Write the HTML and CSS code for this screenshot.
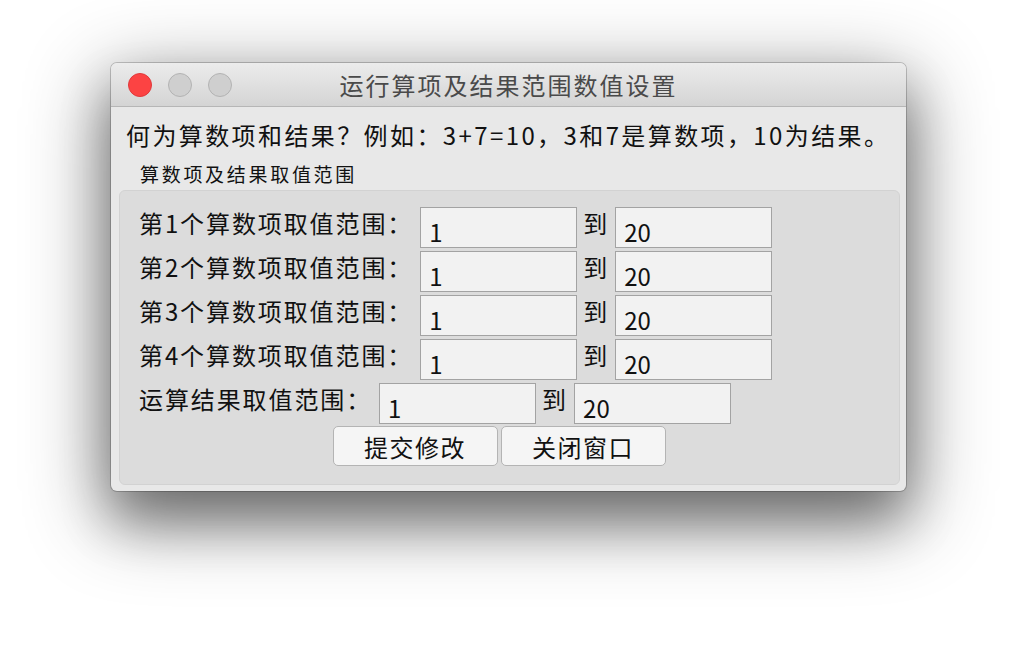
FILE: index.html
```html
<!DOCTYPE html>
<html lang="zh-CN">
<head>
    <meta charset="UTF-8">
    <meta name="viewport" content="width=device-width, initial-scale=1.0">
    <title>运行算项及结果范围数值设置</title>
    <link rel="stylesheet" href="styles.css">
</head>
<body>
    <div class="desktop">
        <div class="window">
            <div class="titlebar">
                <div class="lights">
                    <span class="light close"></span>
                    <span class="light"></span>
                    <span class="light"></span>
                </div>
                <div class="title">运行算项及结果范围数值设置</div>
            </div>
            <div class="content">
                <p class="intro">何为算数项和结果？例如：3+7=10，3和7是算数项，10为结果。</p>
                <div class="group-title">算数项及结果取值范围</div>
                <div class="panel">
                    <div class="row">
                        <label>第1个算数项取值范围：</label>
                        <input type="text" value="1">
                        <span class="to">到</span>
                        <input type="text" value="20">
                    </div>
                    <div class="row">
                        <label>第2个算数项取值范围：</label>
                        <input type="text" value="1">
                        <span class="to">到</span>
                        <input type="text" value="20">
                    </div>
                    <div class="row">
                        <label>第3个算数项取值范围：</label>
                        <input type="text" value="1">
                        <span class="to">到</span>
                        <input type="text" value="20">
                    </div>
                    <div class="row">
                        <label>第4个算数项取值范围：</label>
                        <input type="text" value="1">
                        <span class="to">到</span>
                        <input type="text" value="20">
                    </div>
                    <div class="row">
                        <label>运算结果取值范围：</label>
                        <input type="text" value="1">
                        <span class="to">到</span>
                        <input type="text" value="20">
                    </div>
                    <div class="buttons">
                        <button type="button">提交修改</button>
                        <button type="button">关闭窗口</button>
                    </div>
                </div>
            </div>
        </div>
    </div>
</body>
</html>
```

FILE: styles.css
```css
html, body {
    height: 100%;
}
body {
    margin: 0;
    background-color: #fff;
    font-family: "Noto Sans CJK SC", "Liberation Sans", sans-serif;
    color: #111;
}
.desktop {
    height: 652px;
    padding: 63px 0 0 111px;
    box-sizing: border-box;
    overflow: hidden;
}
.window {
    width: 795px;
    height: 428px;
    box-sizing: border-box;
    background-color: #e8e8e8;
    border-radius: 6px;
    box-shadow: 0 22px 80px 6px rgba(0, 0, 0, 0.45), 0 30px 50px rgba(0, 0, 0, 0.3), 0 0 0 1px rgba(0, 0, 0, 0.2);
    overflow: hidden;
}
.titlebar {
    height: 43px;
    display: grid;
    grid-template-columns: 1fr auto 1fr;
    align-items: center;
    background: linear-gradient(#ececec, #d4d4d4);
    border-bottom: 1px solid #b6b6b6;
}
.lights {
    display: flex;
    gap: 16px;
    padding-left: 17px;
}
.light {
    width: 22px;
    height: 22px;
    border-radius: 50%;
    background-color: #cfcfcf;
    border: 1px solid #b3b3b3;
}
.light.close {
    background-color: #fc4343;
    border-color: #e0393b;
}
.title {
    grid-column: 2;
    font-size: 24px;
    letter-spacing: 2px;
    color: #4a4a4a;
}
.content {
    padding: 0 6px 7px 8px;
}
.intro {
    margin: 0;
    padding: 13px 0 0 7px;
    font-size: 24px;
    line-height: 30px;
    letter-spacing: 2.4px;
}
.group-title {
    padding: 12px 0 0 21px;
    font-size: 19px;
    line-height: 24px;
    letter-spacing: 2.7px;
}
.panel {
    margin-top: 4px;
    background-color: #dcdcdc;
    border: 1px solid #d2d2d2;
    border-radius: 6px;
    padding: 16px 0 18px 19px;
}
.row {
    display: flex;
    align-items: flex-start;
    gap: 6px;
    height: 44px;
}
.row label, .row .to {
    font-size: 24px;
    line-height: 32px;
    letter-spacing: 1.9px;
}
.row label {
    margin-right: 1px;
}
.row .to {
    letter-spacing: 0;
    margin-right: 2px;
}
input[type="text"] {
    width: 157px;
    height: 41px;
    box-sizing: border-box;
    margin: 0;
    padding: 8px 0 0 8px;
    border: 1px solid #a3a3a3;
    background-color: #f2f2f2;
    font-family: inherit;
    font-size: 24px;
    color: #111;
    outline: none;
}
.buttons {
    display: flex;
    justify-content: center;
    gap: 3px;
    padding-right: 40px;
    margin-top: -1px;
}
button {
    width: 165px;
    height: 40px;
    border: 1px solid #b4b4b4;
    border-radius: 5px;
    background-color: #f5f5f5;
    font-family: inherit;
    font-size: 24px;
    letter-spacing: 1.5px;
    color: #111;
    padding: 0;
}
```
